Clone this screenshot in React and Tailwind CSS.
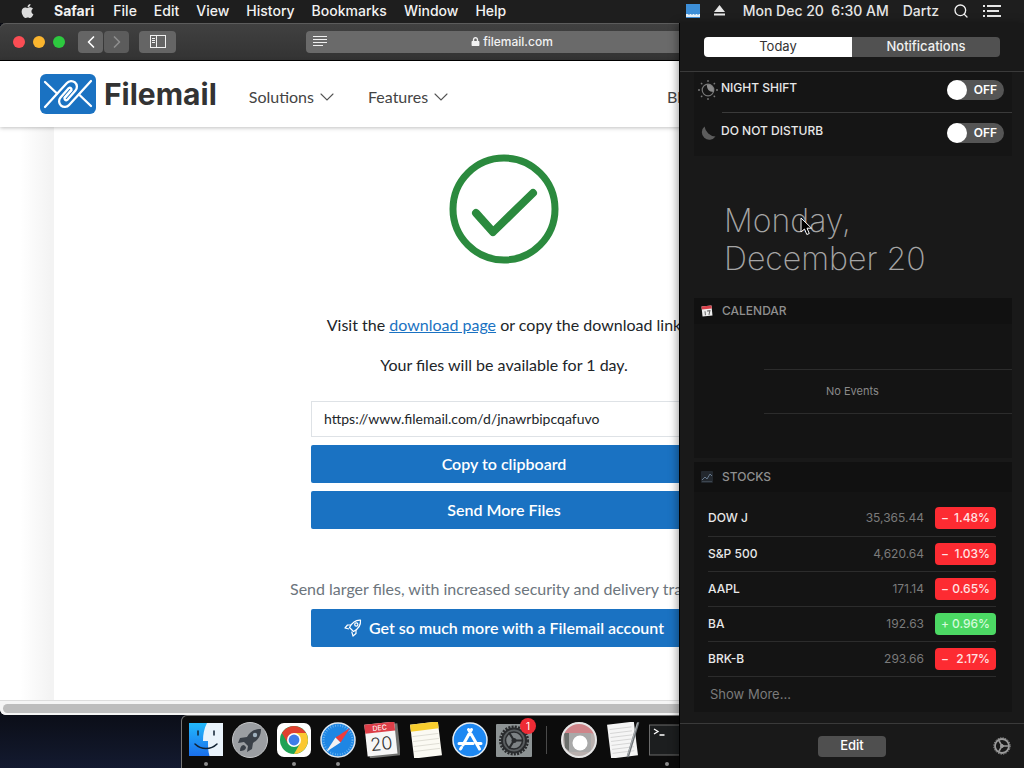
import React, { useState } from 'react';
import { FaApple, FaLock } from 'react-icons/fa';
import { ChevronLeft, ChevronRight, Search } from 'lucide-react';

const menus = ['File', 'Edit', 'View', 'History', 'Bookmarks', 'Window', 'Help'];

const stocks = [
  { symbol: 'DOW J', price: '35,365.44', sign: '−', change: '1.48%' },
  { symbol: 'S&P 500', price: '4,620.64', sign: '−', change: '1.03%' },
  { symbol: 'AAPL', price: '171.14', sign: '−', change: '0.65%' },
  { symbol: 'BA', price: '192.63', sign: '+', change: '0.96%' },
  { symbol: 'BRK-B', price: '293.66', sign: '−', change: '2.17%' },
];

const MenuBar = () => (
  <header className="flex h-[23px] items-center justify-between bg-[#1e1e1e] pr-[23px] pb-0.5 pl-5 text-sm font-medium text-[#f2f2f2]">
    <nav className="flex items-center gap-[17px]">
      <FaApple className="mr-0.5 h-4 w-[15px] text-[#dcdcdc]" />
      <span className="mr-0.5 font-bold">Safari</span>
      {menus.map((menu) => (
        <span key={menu}>{menu}</span>
      ))}
    </nav>
    <div className="flex items-center gap-[14px]">
      <svg width="14" height="14" viewBox="0 0 14 14">
        <rect width="14" height="14" fill="#3d8fd8" />
        <path d="M0 10h14v3H0z" fill="#e8f3fc" />
        <path d="M3 10v1M6 10v1M9 10v1M12 10v1" stroke="#3d8fd8" />
      </svg>
      <svg width="11" height="11" viewBox="0 0 11 11" fill="#e6e6e6" className="mr-1">
        <path d="M5.500 0 11 7H0zM0 8.500h11v2H0z" />
      </svg>
      <span className="whitespace-pre text-[#e6e6e6]">{'Mon Dec 20  6:30 AM'}</span>
      <span className="text-[#e6e6e6]">Dartz</span>
      <Search size={16} strokeWidth={2} />
      <svg width="18" height="12" viewBox="0 0 18 12" fill="#e6e6e6">
        <path d="M0 0h2v2H0zM4 0h14v2H4zM0 5h2v2H0zM4 5h12v2H4zM0 10h2v2H0zM4 10h14v2H4z" />
      </svg>
    </div>
  </header>
);

const SafariToolbar = () => (
  <div className="flex h-[38px] items-center rounded-t-md border-b border-black bg-gradient-to-b from-[#414141] to-[#333] pl-[13px] shadow-[inset_0_1px_0_#5c5c5c]">
    <div className="flex gap-2">
      <span className="h-3 w-3 rounded-full bg-[#fb4d54]" />
      <span className="h-3 w-3 rounded-full bg-[#fbb52e]" />
      <span className="h-3 w-3 rounded-full bg-[#2dc93f]" />
    </div>
    <div className="ml-[13px] flex gap-px">
      <button aria-label="Back" className="flex h-[22px] w-[25px] items-center justify-center rounded bg-[#656565] text-white">
        <ChevronLeft size={20} />
      </button>
      <button aria-label="Forward" className="flex h-[22px] w-[25px] items-center justify-center rounded bg-[#5c5c5c] text-[#8e8e8e]">
        <ChevronRight size={20} />
      </button>
    </div>
    <button aria-label="Sidebar" className="ml-[10px] flex h-[22px] w-[37px] items-center justify-center rounded bg-[#656565]">
      <svg width="16" height="13" viewBox="0 0 16 13" fill="none" stroke="#f0f0f0">
        <rect x=".5" y=".5" width="15" height="12" />
        <path d="M6.500 0v13M2 3.500h3M2 5.500h3M2 7.500h3" />
      </svg>
    </button>
    <div className="mx-[130px] mr-[304px] flex h-[22px] flex-1 items-center rounded bg-[#6a6a6a] px-[7px]">
      <svg width="14" height="11" viewBox="0 0 14 11" stroke="#f0f0f0">
        <path d="M0 .5h14M0 3.500h14M0 6.500h14M0 9.500h10" />
      </svg>
      <div className="flex flex-1 items-center justify-center gap-[3px] pr-4 text-xs font-medium text-[#f2f2f2]">
        <FaLock size={9} />
        filemail.com
      </div>
    </div>
  </div>
);

const FilemailLogo = () => (
  <a href="#home" className="flex items-center gap-2">
    <svg width="56" height="40" viewBox="0 0 56 40" fill="none">
      <rect width="56" height="40" rx="6" fill="#1a72c2" />
      <g stroke="#fff" strokeWidth="2.3" strokeLinecap="round" strokeLinejoin="round">
        <path d="M5 8 17 19.500" />
        <path d="M39 20.500 51 32" />
        <path d="M5 33 26.900 9a5.700 5.700 0 0 1 8.600 7.500L27.200 25.900a1.700 1.700 0 0 1-2.500-2.150L31.300 16.250" />
        <path d="M51 7 29.100 31a5.700 5.700 0 0 1-8.600-7.500L28.800 14.100a1.700 1.700 0 0 1 2.500 2.150L24.700 23.750" />
      </g>
    </svg>
    <span className="font-['Inter'] text-3xl font-bold text-[#333]">Filemail</span>
  </a>
);

const NavChevron = () => (
  <svg width="14" height="8" viewBox="0 0 14 8" fill="none" stroke="#555" strokeWidth="1.1" strokeLinecap="round">
    <path d="m1 1 6 6 6-6" />
  </svg>
);

const SiteHeader = () => (
  <header className="flex h-[66px] items-center bg-white pl-10 text-base text-[#444] shadow-[0_1px_4px_rgba(0,0,0,0.25)]">
    <FilemailLogo />
    <nav className="ml-8 flex flex-1 items-center gap-[34px] pt-[5px]">
      <a href="#solutions" className="flex items-center gap-[6px]">
        Solutions <NavChevron />
      </a>
      <a href="#features" className="flex items-center gap-[6px]">
        Features <NavChevron />
      </a>
      <a href="#blog" className="mr-[343px] ml-auto">Bl</a>
    </nav>
  </header>
);

const RocketOutline = () => (
  <svg width="18" height="18" viewBox="0 0 18 18" fill="none" stroke="#fff" strokeWidth="1.2" strokeLinejoin="round">
    <path d="M16.500 1.200C11.500.8 8.500 3 5.500 8.500l4 4C15 9.500 17 6.500 16.500 1.200z" />
    <circle cx="12.300" cy="5.500" r="1.600" />
    <path d="M7 6H3.500L1 9l4 1M12 11v3.500L9 17l-1.300-4.300" />
  </svg>
);

const DownloadPage = () => (
  <main className="flex flex-1 flex-col bg-gradient-to-r from-white from-[2%] to-[#f3f3f3] to-[5%] pl-[54px]">
    <div className="flex flex-1 flex-col items-center bg-white pt-[27px] pr-[70px] text-[#212529]">
      <svg width="110" height="110" viewBox="0 0 110 110" fill="none" stroke="#2b8a3e">
        <circle cx="55" cy="55" r="51" strokeWidth="7" />
        <path d="M27 59 44 78 84 39" strokeWidth="8" strokeLinecap="round" strokeLinejoin="round" />
      </svg>
      <p className="mt-[49px]">
        Visit the{' '}
        <a href="#download" className="text-[#1a72c2] underline">download page</a>
        {' '}or copy the download link
      </p>
      <p className="mt-4">Your files will be available for 1 day.</p>
      <div className="mt-6 flex w-[386px] flex-col gap-2">
        <input
          aria-label="Download link"
          readOnly
          value="https://www.filemail.com/d/jnawrbipcqafuvo"
          className="h-9 border border-[#dee2e6] px-3 pb-0.5 text-sm outline-none"
        />
        <button className="h-[38px] rounded-xs bg-[#1a72c2] font-semibold text-white">Copy to clipboard</button>
        <button className="h-[38px] rounded-xs bg-[#1a72c2] font-semibold text-white">Send More Files</button>
      </div>
      <p className="mt-12 w-[428px] text-[#6c757d]">Send larger files, with increased security and delivery tra</p>
      <button className="mt-2 flex h-[38px] w-[386px] items-center justify-center gap-[7px] rounded-xs bg-[#1a72c2] font-semibold text-white">
        <RocketOutline />
        Get so much more with a Filemail account
      </button>
    </div>
  </main>
);

const SafariWindow = () => (
  <section className="flex flex-1 flex-col overflow-hidden rounded-md bg-white font-['Lato',sans-serif]">
    <div className="bg-black font-['Inter',sans-serif]">
      <SafariToolbar />
    </div>
    <div className="relative">
      <SiteHeader />
    </div>
    <DownloadPage />
    <div className="border-t border-[#ddd] bg-[#f5f5f5] px-[3px] pt-[3px] pb-[2px]">
      <div className="h-[9px] rounded-full bg-[#bdbdbd]" />
    </div>
  </section>
);

const FinderIcon = () => (
  <svg width="36" height="36" viewBox="0 0 36 36">
    <defs>
      <linearGradient id="finder" x2="0" y2="1">
        <stop stopColor="#22b9fb" />
        <stop offset="1" stopColor="#1a6fec" />
      </linearGradient>
    </defs>
    <rect x="1" y="1" width="34" height="33" fill="#e9f3fb" />
    <path d="M1 1h18c-3 6-4 11-4 18h5c0 5 0 10 1.500 15H1z" fill="url(#finder)" />
    <path d="M10 9v4M26 9v4" stroke="#123" strokeWidth="1.500" strokeLinecap="round" />
    <path d="M7 22c6 6 16 6 22 0" stroke="#123" strokeWidth="1.500" fill="none" strokeLinecap="round" />
  </svg>
);

const LaunchpadIcon = () => (
  <svg width="36" height="36" viewBox="0 0 36 36">
    <circle cx="18" cy="18" r="17.500" fill="#9b9ea2" stroke="#c6c8ca" />
    <path d="M29 7c-7 0-11 3-14 8l-7 1-2 5 6-1 4 4-1 6 5-3 1-6c5-3 8-7 8-14z" fill="#3a4048" />
    <circle cx="23" cy="13" r="2.200" fill="#9fb0bd" />
    <path d="M12 23c-3 0-4 3-4 6 3 0 6-1 6-4z" fill="#3a4048" />
  </svg>
);

const ChromeIcon = () => (
  <svg width="36" height="36" viewBox="0 0 36 36">
    <rect x="1" y="1" width="34" height="34" rx="7" fill="#fff" />
    <circle cx="18" cy="18" r="14" fill="#1fa255" />
    <path d="M5.900 11A14 14 0 0 1 30.100 11H18l-6 10.500z" fill="#e0412f" />
    <path d="M30.100 11A14 14 0 0 1 18 32l6-10.500L18 11z" fill="#fbc832" />
    <circle cx="18" cy="18" r="7" fill="#fff" />
    <circle cx="18" cy="18" r="5.400" fill="#3f7de8" />
  </svg>
);

const SafariIcon = () => (
  <svg width="36" height="36" viewBox="0 0 36 36">
    <circle cx="18" cy="18" r="17" fill="#1e86e4" stroke="#dfe7ee" strokeWidth="1.500" />
    <circle cx="18" cy="18" r="14.500" fill="none" stroke="#7fbff2" strokeWidth="2" strokeDasharray=".7 1.800" />
    <path d="M30 6 15.500 15.500l5 5z" fill="#ee3c3c" />
    <path d="M6 30 15.500 15.500l5 5z" fill="#f2f2f2" />
  </svg>
);

const CalendarIcon = () => (
  <svg width="36" height="36" viewBox="0 0 36 36">
    <g transform="rotate(-6 18 18)">
      <rect x="4" y="3" width="31" height="32" fill="#70716f" />
      <rect x="2" y="1" width="30" height="32" fill="#f6f6f6" />
      <path d="M2 1h30v9H2z" fill="#dd3e48" />
      <text x="17" y="8" fontSize="7" fill="#fff" textAnchor="middle" fontFamily="Inter">DEC</text>
      <text x="17" y="28" fontSize="18" fill="#333" textAnchor="middle" fontFamily="Inter" fontWeight="300">20</text>
    </g>
  </svg>
);

const NotesIcon = () => (
  <svg width="36" height="36" viewBox="0 0 36 36">
    <g transform="rotate(-7 18 18)">
      <rect x="4" y="1" width="28" height="34" fill="#fbfaf3" />
      <path d="M4 1h28v7H4z" fill="#f7cd2e" />
      <path d="M5 13h26M5 18h26M5 23h26M5 28h26" stroke="#d9d8ce" strokeWidth=".8" />
    </g>
  </svg>
);

const AppStoreIcon = () => (
  <svg width="36" height="36" viewBox="0 0 36 36">
    <circle cx="18" cy="18" r="17" fill="#1e88f2" stroke="#e4edf5" strokeWidth="1.500" />
    <path d="M19.500 7.500 11 23M9.500 25.500 8.500 27M16.500 7.500 27.500 27M7 21.500h14M25.500 21.500H29" stroke="#fff" strokeWidth="3" strokeLinecap="round" />
  </svg>
);

const PreferencesIcon = () => (
  <svg width="38" height="36" viewBox="0 0 38 36">
    <rect x="1" y="2" width="36" height="33" rx="1" fill="#8d9394" />
    <circle cx="19" cy="18.500" r="13.500" fill="none" stroke="#292b2d" strokeWidth="3" strokeDasharray="2 1.200" />
    <circle cx="19" cy="18.500" r="12" fill="#595d5f" stroke="#292b2d" strokeWidth="2" />
    <circle cx="19" cy="18.500" r="8.500" fill="#7d8284" stroke="#292b2d" strokeWidth="1.500" />
    <path d="M19 18.500h9M19 18.500l-5-8M19 18.500l-5 8" stroke="#292b2d" strokeWidth="2.200" />
    <circle cx="19" cy="18.500" r="2.500" fill="#292b2d" />
  </svg>
);

const DiskIcon = () => (
  <svg width="36" height="36" viewBox="0 0 36 36">
    <circle cx="18" cy="18" r="17.500" fill="#b9b0ae" />
    <path d="M2 12A17 17 0 0 1 34 12l-5-1H8z" fill="#cf8489" />
    <path d="M3 11h5v18l-4-3z" fill="#6c6f6c" />
    <rect x="8" y="11" width="22" height="19" fill="#a9a9a9" />
    <circle cx="19" cy="21" r="7.500" fill="#fff" />
    <circle cx="18" cy="18" r="17" fill="none" stroke="#e6e6e6" strokeWidth="2" />
  </svg>
);

const TextEditIcon = () => (
  <svg width="36" height="36" viewBox="0 0 36 36">
    <g transform="rotate(-7 18 18)">
      <rect x="4" y="1" width="27" height="34" fill="#f5f5f5" />
      <path d="M6 6h22M6 10h22M6 14h22M6 18h22M6 22h22M6 26h22M6 30h22" stroke="#cfcfcf" strokeWidth=".8" />
    </g>
    <path d="M33 1 23 34" stroke="#6d7276" strokeWidth="2.500" strokeLinecap="round" />
    <path d="M32.500 1 22.500 34" stroke="#c7cbce" strokeWidth=".7" />
  </svg>
);

const TerminalIcon = () => (
  <svg width="36" height="36" viewBox="0 0 36 36">
    <rect x=".5" y="3" width="35" height="30" fill="#1c1e1f" stroke="#6a6a6a" />
    <path d="m5 7 4 2.500L5 12M10.500 13h5" stroke="#fff" strokeWidth="1.300" fill="none" />
  </svg>
);

const dockApps = [
  { name: 'Finder', Icon: FinderIcon, running: true },
  { name: 'Launchpad', Icon: LaunchpadIcon },
  { name: 'Chrome', Icon: ChromeIcon, running: true },
  { name: 'Safari', Icon: SafariIcon, running: true },
  { name: 'Calendar', Icon: CalendarIcon },
  { name: 'Notes', Icon: NotesIcon },
  { name: 'App Store', Icon: AppStoreIcon },
  { name: 'System Preferences', Icon: PreferencesIcon, badge: 1 },
];

const dockDocs = [
  { name: 'Disk Utility', Icon: DiskIcon },
  { name: 'TextEdit', Icon: TextEditIcon },
  { name: 'Terminal', Icon: TerminalIcon, running: true },
];

const DockItem = ({ app }) => (
  <button aria-label={app.name} className="relative flex w-11 flex-col items-center">
    <app.Icon />
    {app.running && <span className="mt-1 h-1 w-1 rounded-full bg-[#8d8d8d]" />}
    {app.badge && (
      <span className="absolute -top-1 right-0 flex h-4 w-4 items-center justify-center rounded-full bg-[#ee2b35] text-[10px] text-white">
        {app.badge}
      </span>
    )}
  </button>
);

const Dock = () => (
  <footer className="mx-auto flex h-[53px] w-[662px] items-start rounded-t-md border border-b-0 border-[#777] bg-[#0c0c0c] px-[2px] pt-[6px]">
    {dockApps.map((app) => (
      <DockItem key={app.name} app={app} />
    ))}
    <span className="mx-[10px] mt-1 h-7 w-px bg-[#4a4a4a]" />
    {dockDocs.map((app) => (
      <DockItem key={app.name} app={app} />
    ))}
  </footer>
);

const Toggle = ({ id, checked, onChange }) => (
  <span className="relative flex h-5 w-[57px] items-center rounded-full bg-[#555] text-xs font-semibold text-white">
    <input
      id={id}
      type="checkbox"
      checked={checked}
      onChange={onChange}
      className="peer absolute inset-0 z-10 h-full w-full cursor-pointer opacity-0"
    />
    <span className="h-5 w-5 rounded-full bg-white peer-checked:order-last" />
    <span className="flex-1 text-center">{checked ? 'ON' : 'OFF'}</span>
  </span>
);

const NightShiftIcon = () => (
  <svg width="20" height="20" viewBox="0 0 20 20" fill="none" stroke="#777">
    <circle cx="10" cy="10" r="5.800" strokeWidth="1.200" />
    <path d="M9 4.500C8.500 9 11 12 15.500 12A5.800 5.800 0 0 0 9 4.500z" fill="#8a8a8a" stroke="none" />
    <path d="M10 0v2M10 18v2M0 10h2M18 10h2M3 3l1.300 1.300M15.700 15.700 17 17M3 17l1.300-1.300M15.700 4.300 17 3" strokeWidth="1.300" />
  </svg>
);

const MoonIcon = () => (
  <svg width="20" height="20" viewBox="0 0 20 20" fill="#5c5c5c">
    <path d="M6.500 3.500A7.500 7.500 0 1 0 17.500 13.500 12 12 0 0 1 6.500 3.500z" />
  </svg>
);

const StocksTable = () => (
  <table className="mr-4 ml-[14px] border-collapse text-xs">
    <tbody>
      {stocks.map((stock) => (
        <tr key={stock.symbol} className="h-[35px] border-b border-[#2c2c2c]">
          <th scope="row" className="text-left font-medium text-[#e8e8e8]">{stock.symbol}</th>
          <td className="pr-[11px] text-right text-[#7b7b7b]">{stock.price}</td>
          <td className="w-[61px]">
            <span
              className={`flex h-[22px] items-center justify-between rounded px-[6px] font-medium ${
                stock.sign === '+' ? 'bg-[#4cd964] text-[#d5fbdc]' : 'bg-[#fd2b32] text-[#ffe3e3]'
              }`}
            >
              <span>{stock.sign}</span>
              {stock.change}
            </span>
          </td>
        </tr>
      ))}
    </tbody>
  </table>
);

const NotificationCenter = () => {
  const [nightShift, setNightShift] = useState(false);
  const [dnd, setDnd] = useState(false);

  return (
    <aside className="absolute top-[23px] right-0 bottom-0 flex w-[345px] flex-col border-l border-black bg-[#191919] text-[#e8e8e8] shadow-[-2px_0_8px_rgba(0,0,0,0.35)]">
      <div className="border-b border-[#3a3a3a] px-6 pt-[14px] pb-[14px]">
        <div className="flex h-5 overflow-hidden rounded text-[13px]">
          <button className="flex-1 bg-white text-[#333]">Today</button>
          <button className="flex-1 bg-[#515151] font-medium text-[#f0f0f0]">Notifications</button>
        </div>
      </div>

      <div className="mx-3 ml-[14px] bg-[#151515] text-xs font-medium">
        <div className="flex h-[40px] items-center gap-[3px] pr-2 pb-1 pl-1">
          <NightShiftIcon />
          <label htmlFor="night-shift" className="flex-1 pb-1">NIGHT SHIFT</label>
          <Toggle id="night-shift" checked={nightShift} onChange={() => setNightShift(!nightShift)} />
        </div>
        <div className="ml-7 border-t border-[#3a3a3a]" />
        <div className="flex h-[43px] items-center gap-[3px] pr-2 pb-1 pl-1">
          <MoonIcon />
          <label htmlFor="dnd" className="flex-1 pb-1">DO NOT DISTURB</label>
          <Toggle id="dnd" checked={dnd} onChange={() => setDnd(!dnd)} />
        </div>
      </div>

      <h1 className="relative mt-[46px] ml-11 text-[32px] leading-[38px] font-extralight text-[#a5a5a5]">
        Monday,
        <br />
        December 20
        <svg width="12" height="19" viewBox="0 0 12 19" className="absolute top-[15px] left-[76px]">
          <path d="M1 1v14l3.500-3 2.300 5.500 2.500-1L7 11.200h4.500z" fill="#000" stroke="#fff" />
        </svg>
      </h1>

      <section className="mt-5 mr-3 ml-[14px] h-40 bg-[#141414]">
        <h2 className="flex h-[26px] items-center gap-[9px] bg-[#111] pl-[7px] text-xs font-medium text-[#8f8f8f]">
          <svg width="12" height="12" viewBox="0 0 12 12">
            <g transform="rotate(-6 6 6)">
              <rect x="1" y="1" width="10" height="10" fill="#eee" />
              <path d="M1 1h10v3H1z" fill="#d8404a" />
              <path d="M4 6v4M6 6h3L7.500 10" stroke="#666" fill="none" />
            </g>
          </svg>
          CALENDAR
        </h2>
        <p className="mt-[45px] ml-[70px] flex h-[45px] items-center border-y border-[#2c2c2c] pl-[62px] text-[11px] text-[#8a8a8a]">
          No Events
        </p>
      </section>

      <section className="mt-1 mr-3 ml-[14px] flex flex-col bg-[#141414] pb-2">
        <h2 className="mb-[9px] flex h-[30px] items-center gap-[9px] bg-[#111] pl-[7px] text-xs font-medium text-[#8f8f8f]">
          <svg width="12" height="12" viewBox="0 0 12 12">
            <rect width="12" height="12" rx="1" fill="#23282e" />
            <path d="m1 9 3-3 2 2 3-5 2 2" stroke="#66788c" fill="none" />
            <path d="M1 10.500h10" stroke="#3d4650" />
          </svg>
          STOCKS
        </h2>
        <StocksTable />
        <button className="mt-2 ml-4 self-start text-[13px] text-[#7b7b7b]">Show More...</button>
      </section>

      <div className="mt-auto flex h-[45px] items-center justify-between border-t border-[#3a3a3a] pr-[13px] pl-[138px]">
        <button className="h-[21px] w-[68px] rounded bg-[#4f4f4f] text-[13px] font-medium text-white">Edit</button>
        <button aria-label="Notification preferences">
          <svg width="18" height="18" viewBox="0 0 18 18" fill="none" stroke="#9a9a9a">
            <circle cx="9" cy="9" r="7" strokeWidth="1.800" />
            <circle cx="9" cy="9" r="8.200" strokeDasharray="1.300 1.300" />
            <path d="M9 9h7M9 9 5.500 3M9 9l-3.500 6" strokeWidth="1.500" />
            <circle cx="9" cy="9" r="1.500" fill="#9a9a9a" />
          </svg>
        </button>
      </div>
    </aside>
  );
};

const App = () => (
  <div className="relative flex min-h-screen flex-col overflow-hidden bg-gradient-to-b from-[#0a0c14] from-[92%] to-[#131a30] font-['Inter',sans-serif]">
    <MenuBar />
    <SafariWindow />
    <Dock />
    <NotificationCenter />
  </div>
);

export default App;
